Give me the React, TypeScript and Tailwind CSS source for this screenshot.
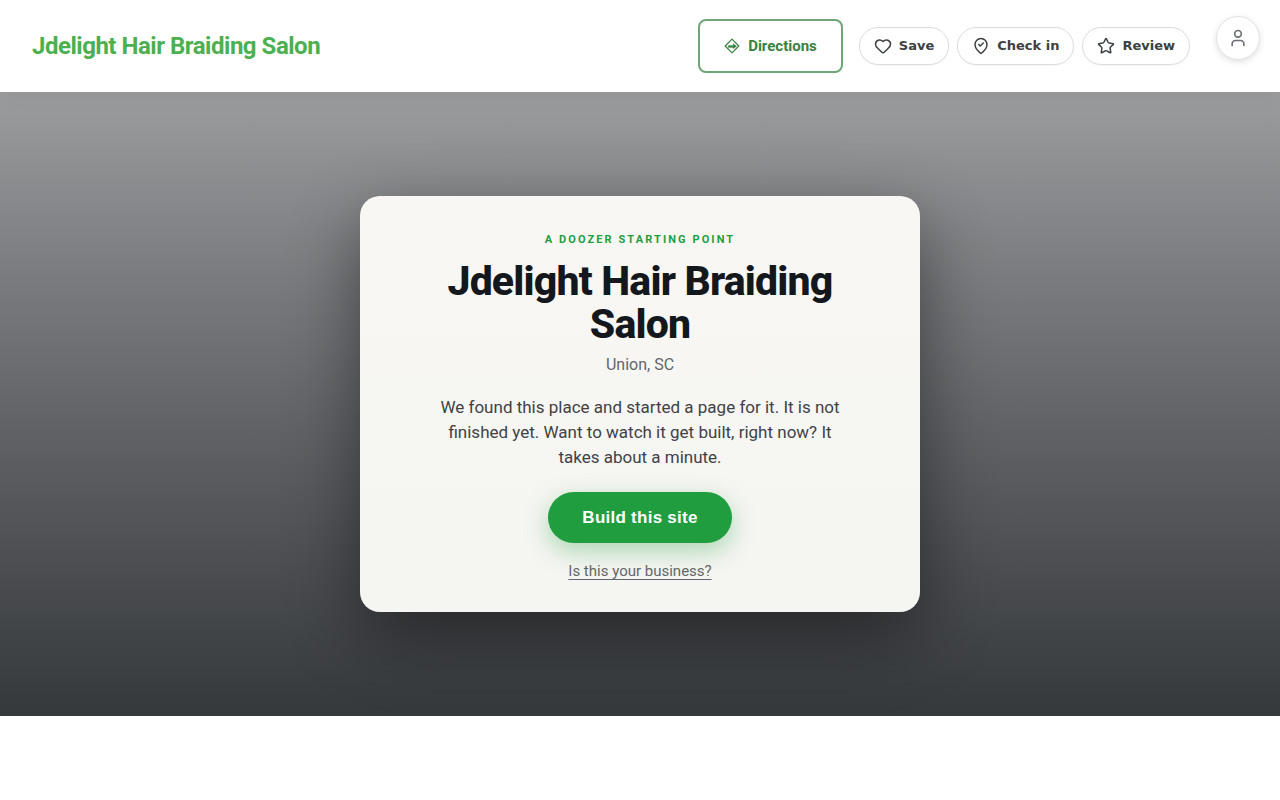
import React from "react";
import { Heart, Star, User } from "lucide-react";

const pillClass =
  "flex h-[38px] items-center gap-[7px] rounded-full border border-[#dcdde0] bg-white px-3.5 font-['DejaVu_Sans',sans-serif] text-[13px] font-bold text-[#3c4043] shadow-[0_1px_2px_rgba(0,0,0,0.04)]";

const DirectionsIcon = () => (
  <svg width="16" height="16" viewBox="0 0 16 16" fill="none" stroke="currentColor" aria-hidden="true">
    <path d="M8 1.2 14.8 8 8 14.8 1.2 8Z" strokeWidth="1.2" strokeLinejoin="round" />
    <path d="M4.2 7.4h5V5.6L12.6 8.2 9.2 10.8V9.4h-5Z" fill="currentColor" strokeWidth="0.3" />
  </svg>
);

const CheckInIcon = () => (
  <svg
    width="18"
    height="18"
    viewBox="0 0 24 24"
    fill="none"
    stroke="currentColor"
    strokeWidth="2"
    strokeLinecap="round"
    strokeLinejoin="round"
    aria-hidden="true"
  >
    <path d="M12 22s8-6 8-12a8 8 0 0 0-16 0c0 6 8 12 8 12Z" />
    <path d="m9 10 2 2 4-4" />
  </svg>
);

const Header: React.FC = () => (
  <header className="relative z-10 flex h-[92px] items-center bg-white pl-8 pr-5 shadow-[0_2px_20px_rgba(0,0,0,0.06)]">
    <a href="#" className="text-2xl font-bold tracking-[-0.02em] text-[#4caf50]">
      Jdelight Hair Braiding Salon
    </a>

    <div className="ml-auto flex items-center gap-4">
      <a
        href="#"
        className="flex h-[54px] items-center gap-2 rounded-lg border-2 border-[#6fa678] px-6 text-[15px] font-bold text-[#388142]"
      >
        <DirectionsIcon />
        Directions
      </a>

      <div className="flex gap-2">
        <button type="button" className={pillClass}>
          <Heart size={18} />
          Save
        </button>
        <button type="button" className={pillClass}>
          <CheckInIcon />
          Check in
        </button>
        <button type="button" className={pillClass}>
          <Star size={18} />
          Review
        </button>
      </div>
    </div>

    {/* Account */}
    <button
      type="button"
      aria-label="Account"
      className="ml-[26px] mt-4 flex size-11 items-center justify-center self-start rounded-full border border-[#e2e3e5] bg-white text-[#6b6f74] shadow-[0_2px_6px_rgba(0,0,0,0.12)]"
    >
      <User size={20} />
    </button>
  </header>
);

const Hero: React.FC = () => (
  <section className="flex justify-center bg-linear-to-b from-[#9b9c9e] via-[#646669] to-[#36393c] px-4 py-[104px]">
    <div className="flex w-full max-w-[560px] flex-col items-center rounded-[20px] bg-linear-to-b from-[#f8f7f4] to-[#f5f5f1] px-10 pb-[31px] pt-9 text-center shadow-[0_24px_70px_rgba(0,0,0,0.45)]">
      <p className="text-[11px] font-bold uppercase leading-4 tracking-[0.19em] text-[#1f9d3f]">
        A Doozer starting point
      </p>
      <h1 className="mt-3 text-[41px] font-extrabold leading-[43px] tracking-[-0.02em] text-[#14171c]">
        Jdelight Hair Braiding Salon
      </h1>
      <p className="mt-2 text-base leading-[21px] text-[#63666a]">Union, SC</p>
      <p className="mt-5 max-w-[420px] text-[17px] leading-[25px] text-[#3f4246]">
        We found this place and started a page for it. It is not finished yet. Want to watch it get
        built, right now? It takes about a minute.
      </p>
      <button
        type="button"
        className="mt-[22px] h-[51px] rounded-full bg-[#1f9d3f] px-[34px] font-['Liberation_Sans',sans-serif] text-[17px] font-bold tracking-[0.015em] text-white shadow-[0_8px_24px_rgba(31,157,63,0.35)]"
      >
        Build this site
      </button>
      <a
        href="#"
        className="mt-[18px] text-[15px] leading-5 text-[#63666a] underline underline-offset-[3px]"
      >
        Is this your business?
      </a>
    </div>
  </section>
);

const App: React.FC = () => (
  <div className="min-h-screen bg-white font-[Roboto,sans-serif]">
    <Header />
    <main>
      <Hero />
    </main>
  </div>
);

export default App;
